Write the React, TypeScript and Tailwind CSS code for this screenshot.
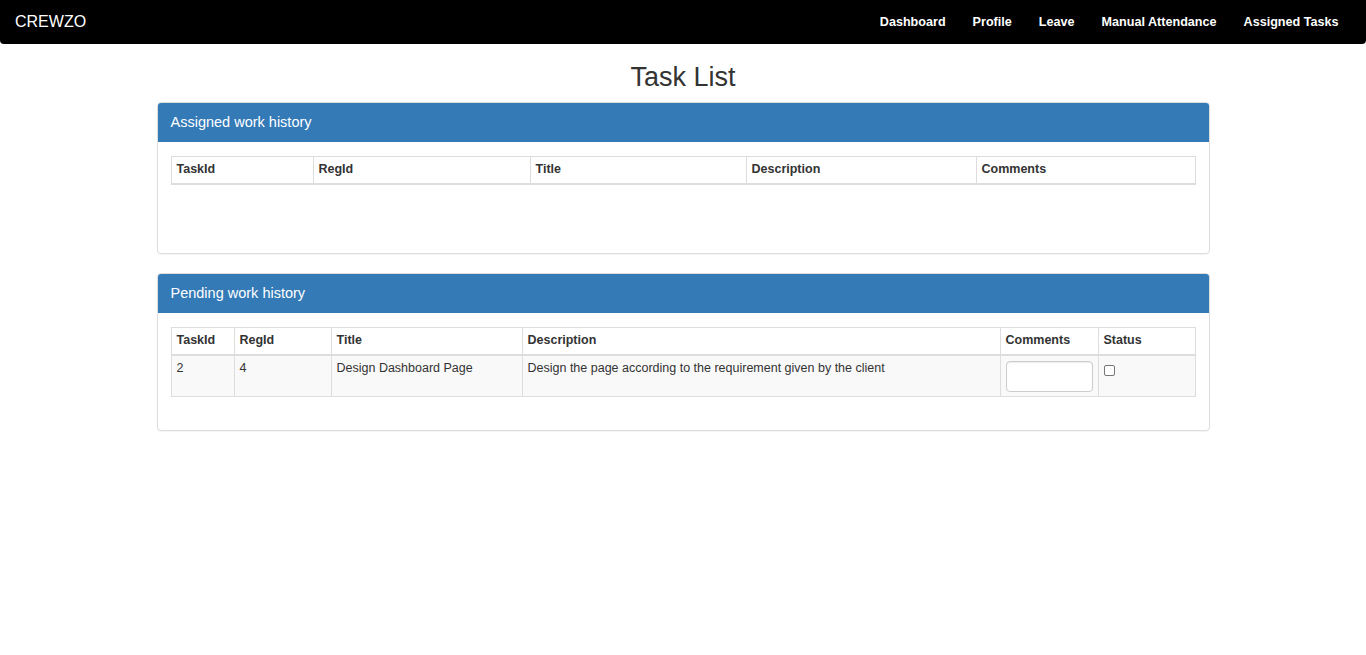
import { useState } from 'react';

const navLinks = ['Dashboard', 'Profile', 'Leave', 'Manual Attendance', 'Assigned Tasks'];

const TaskList = (): JSX.Element => {
  const [comment, setComment] = useState('');
  const [done, setDone] = useState(false);

  return (
    <div className="min-h-screen bg-white font-['Liberation_Sans',Arial,sans-serif] text-[#333]">
      {/* Navbar */}
      <nav className="flex h-[44px] items-center justify-between rounded-b-[4px] bg-black pl-[15px] pr-[14px]">
        <span className="text-[16px] text-white">CREWZO</span>
        <ul className="flex">
          {navLinks.map((link) => (
            <li key={link} className="px-[13.5px] text-[12.6px] font-bold text-white">
              {link}
            </li>
          ))}
        </ul>
      </nav>

      <h1 className="mt-[17px] mb-[8px] text-center text-[27px] leading-[33px]">Task List</h1>

      <div className="mx-auto w-[1053px]">
        {/* Assigned panel */}
        <div className="mb-[19px] rounded-[4px] border border-[#ddd] shadow-[0_1px_1px_rgba(0,0,0,0.05)]">
          <div className="h-[39px] rounded-t-[3px] bg-[#337ab7] px-[13px] pt-[11px] text-[14.5px] leading-[17px] text-white">
            Assigned work history
          </div>
          <div className="px-[13px] pt-[14px] pb-[68px]">
            <table className="w-full border-collapse border border-[#ddd] text-[12.5px]">
              <thead>
                <tr className="border-b-2 border-[#ddd] text-left font-bold">
                  <th className="w-[142px] border border-[#ddd] px-[5px] pt-[3px] pb-[5px] leading-[18px]">TaskId</th>
                  <th className="w-[217px] border border-[#ddd] px-[5px] pt-[3px] pb-[5px] leading-[18px]">RegId</th>
                  <th className="w-[216px] border border-[#ddd] px-[5px] pt-[3px] pb-[5px] leading-[18px]">Title</th>
                  <th className="w-[230px] border border-[#ddd] px-[5px] pt-[3px] pb-[5px] leading-[18px]">Description</th>
                  <th className="border border-[#ddd] px-[5px] pt-[3px] pb-[5px] leading-[18px]">Comments</th>
                </tr>
              </thead>
            </table>
          </div>
        </div>

        {/* Pending panel */}
        <div className="rounded-[4px] border border-[#ddd] shadow-[0_1px_1px_rgba(0,0,0,0.05)]">
          <div className="h-[39px] rounded-t-[3px] bg-[#337ab7] px-[13px] pt-[11px] text-[14.5px] leading-[17px] text-white">
            Pending work history
          </div>
          <div className="px-[13px] pt-[14px] pb-[33px]">
            <table className="w-full border-collapse border border-[#ddd] text-[12.5px]">
              <thead>
                <tr className="border-b-2 border-[#ddd] text-left font-bold">
                  <th className="w-[63px] border border-[#ddd] px-[5px] pt-[3px] pb-[5px] leading-[18px]">TaskId</th>
                  <th className="w-[97px] border border-[#ddd] px-[5px] pt-[3px] pb-[5px] leading-[18px]">RegId</th>
                  <th className="w-[191px] border border-[#ddd] px-[5px] pt-[3px] pb-[5px] leading-[18px]">Title</th>
                  <th className="w-[478px] border border-[#ddd] px-[5px] pt-[3px] pb-[5px] leading-[18px]">Description</th>
                  <th className="w-[96px] border border-[#ddd] px-[5px] pt-[3px] pb-[5px] leading-[18px]">Comments</th>
                  <th className="border border-[#ddd] px-[5px] pt-[3px] pb-[5px] leading-[18px]">Status</th>
                </tr>
              </thead>
              <tbody>
                <tr className="bg-[#f9f9f9] align-top">
                  <td className="border border-[#ddd] px-[5px] pt-[3px] pb-[4px] leading-[18px]">2</td>
                  <td className="border border-[#ddd] px-[5px] pt-[3px] pb-[4px] leading-[18px]">4</td>
                  <td className="border border-[#ddd] px-[5px] pt-[3px] pb-[4px] leading-[18px]">Design Dashboard Page</td>
                  <td className="border border-[#ddd] px-[5px] pt-[3px] pb-[4px] leading-[18px]">
                    Design the page according to the requirement given by the client
                  </td>
                  <td className="border border-[#ddd] px-[5px] pt-[5px] pb-[4px]">
                    <input
                      type="text"
                      value={comment}
                      onChange={(e) => setComment(e.target.value)}
                      className="block h-[31px] w-[87px] rounded-[4px] border border-[#ccc] bg-white px-[6px] text-[13px] shadow-[inset_0_1px_1px_rgba(0,0,0,0.075)]"
                    />
                  </td>
                  <td className="border border-[#ddd] px-[5px] pt-[5px] pb-[4px]">
                    <input
                      type="checkbox"
                      checked={done}
                      onChange={() => setDone(!done)}
                      className="mt-[4px] h-[11px] w-[11px] appearance-none rounded-[2px] border border-[#767676] bg-white"
                    />
                  </td>
                </tr>
              </tbody>
            </table>
          </div>
        </div>
      </div>
    </div>
  );
};

export default function App(): JSX.Element {
  return <TaskList />;
}
